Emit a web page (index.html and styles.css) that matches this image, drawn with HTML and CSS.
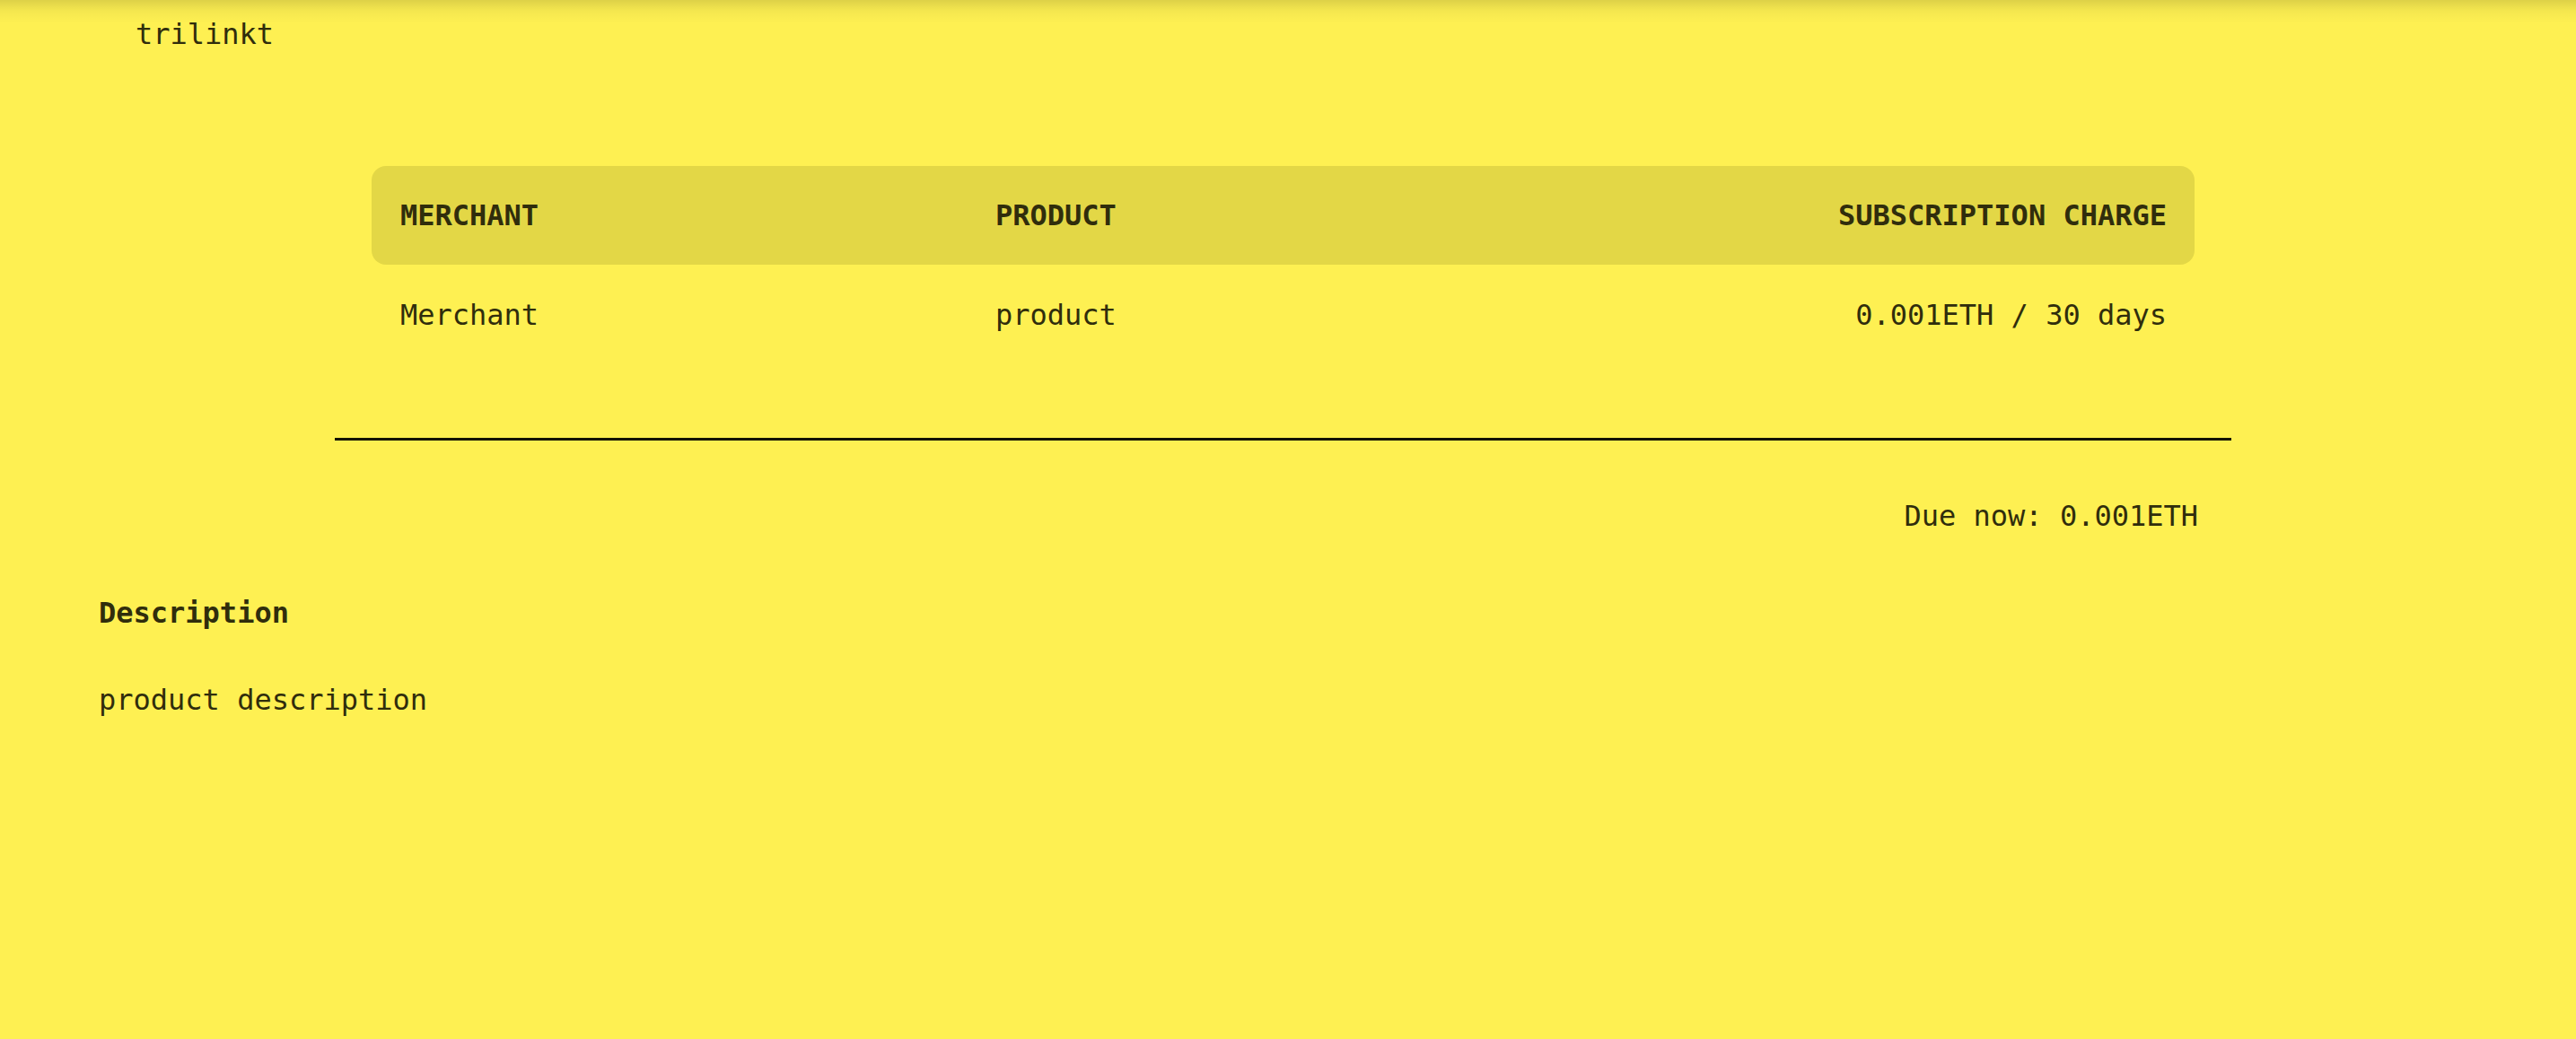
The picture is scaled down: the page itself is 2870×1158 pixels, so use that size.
FILE: index.html
```html
<!DOCTYPE html>
<html lang="en">
<head>
<meta charset="utf-8">
<title>trilinkt</title>
<link rel="stylesheet" href="styles.css">
</head>
<body>
<header class="topbar">
  <span class="brand">trilinkt</span>
</header>
<main class="page">
  <section class="invoice">
    <div class="table">
      <div class="row head">
        <div class="cell">MERCHANT</div>
        <div class="cell">PRODUCT</div>
        <div class="cell right">SUBSCRIPTION CHARGE</div>
      </div>
      <div class="row body">
        <div class="cell">Merchant</div>
        <div class="cell">product</div>
        <div class="cell right">0.001ETH / 30 days</div>
      </div>
    </div>
    <hr class="divider">
    <p class="due">Due now: 0.001ETH</p>
  </section>
  <section class="details">
    <h2 class="details-title">Description</h2>
    <p class="details-text">product description</p>
  </section>
</main>
</body>
</html>
```

FILE: styles.css
```css
html, body {
  margin: 0;
  padding: 0;
}
body {
  background: #fef052;
  color: #302d0c;
  font-family: "DejaVu Sans Mono", "Liberation Mono", monospace;
  font-size: 32px;
  line-height: 38px;
  min-height: 1158px;
}
.topbar {
  height: 76px;
  display: flex;
  align-items: center;
  padding-left: 151px;
  background: linear-gradient(to bottom, rgba(0,0,0,0.13), rgba(0,0,0,0.04) 12px, rgba(0,0,0,0) 26px);
}
.brand {
  display: block;
}
.page {
  padding-top: 109px;
}
.invoice {
  width: 2113px;
  margin-left: 373px;
}
.table {
  margin: 0 41px;
}
.row {
  display: grid;
  grid-template-columns: 663px 1fr 1fr;
  align-items: center;
}
.row.head {
  height: 110px;
  background: #e3d746;
  border-radius: 16px;
  font-weight: bold;
}
.row.body {
  height: 112px;
}
.cell {
  padding: 0 32px;
  white-space: nowrap;
}
.cell.right {
  text-align: right;
  padding-right: 31px;
}
.divider {
  margin: 81px 0 0;
  border: 0;
  height: 3px;
  background: #141304;
}
.due {
  margin: 65px 0 0;
  text-align: right;
  padding-right: 37px;
}
.details {
  padding-left: 110px;
}
.details-title {
  margin: 70px 0 0;
  font-size: 32px;
  line-height: 38px;
  font-weight: bold;
}
.details-text {
  margin: 59px 0 0;
}
```
